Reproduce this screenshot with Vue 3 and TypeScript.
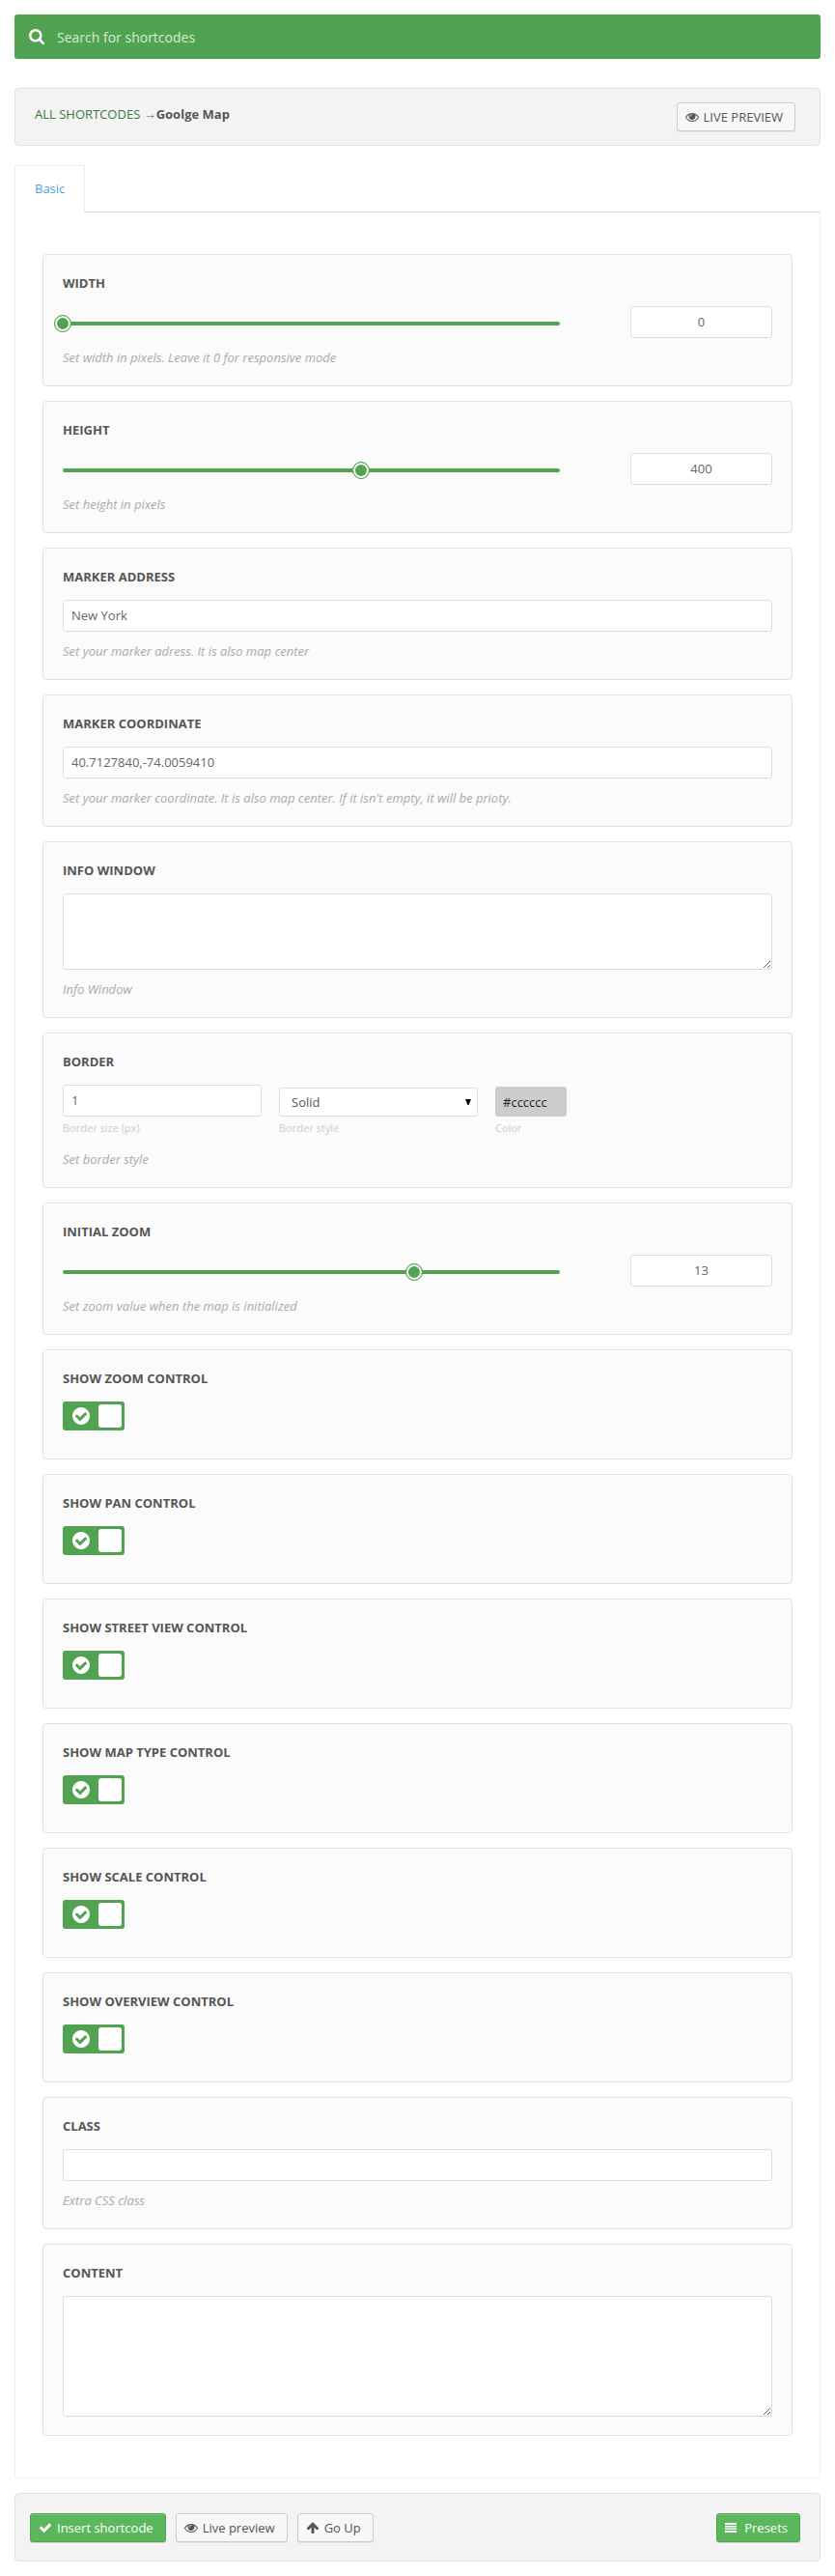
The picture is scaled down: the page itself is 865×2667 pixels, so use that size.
<script setup lang="ts">
import { ref } from 'vue'

type Kind = 'slider' | 'text' | 'area' | 'border' | 'toggle'
interface Field {
  id: string
  title: string
  kind: Kind
  value?: string
  hint?: string
  percent?: number
  tall?: boolean
}

const query = ref('')
const fields = ref<Field[]>([
  { id: 'width', title: 'WIDTH', kind: 'slider', value: '0', percent: 0, hint: 'Set width in pixels. Leave it 0 for responsive mode' },
  { id: 'height', title: 'HEIGHT', kind: 'slider', value: '400', percent: 60, hint: 'Set height in pixels' },
  { id: 'address', title: 'MARKER ADDRESS', kind: 'text', value: 'New York', hint: 'Set your marker adress. It is also map center' },
  { id: 'coordinate', title: 'MARKER COORDINATE', kind: 'text', value: '40.7127840,-74.0059410', hint: "Set your marker coordinate. It is also map center. If it isn't empty, it will be prioty." },
  { id: 'info', title: 'INFO WINDOW', kind: 'area', value: '', hint: 'Info Window' },
  { id: 'border', title: 'BORDER', kind: 'border', hint: 'Set border style' },
  { id: 'zoom', title: 'INITIAL ZOOM', kind: 'slider', value: '13', percent: 70.7, hint: 'Set zoom value when the map is initialized' },
  { id: 'show-zoom', title: 'SHOW ZOOM CONTROL', kind: 'toggle' },
  { id: 'show-pan', title: 'SHOW PAN CONTROL', kind: 'toggle' },
  { id: 'show-street', title: 'SHOW STREET VIEW CONTROL', kind: 'toggle' },
  { id: 'show-type', title: 'SHOW MAP TYPE CONTROL', kind: 'toggle' },
  { id: 'show-scale', title: 'SHOW SCALE CONTROL', kind: 'toggle' },
  { id: 'show-overview', title: 'SHOW OVERVIEW CONTROL', kind: 'toggle' },
  { id: 'class', title: 'CLASS', kind: 'text', value: '', hint: 'Extra CSS class' },
  { id: 'content', title: 'CONTENT', kind: 'area', value: '', tall: true },
])
const borderSize = ref('1')
const borderColor = ref('#cccccc')

const eye =
  'M1664 960q-152-236-381-353 61 104 61 225 0 185-131.5 316.5T896 1280t-316.5-131.5T448 832q0-121 61-225-229 117-381 353 133 205 333.5 326.5T896 1408t434.5-121.5T1664 960zM944 576q0-20-14-34t-34-14q-125 0-214.500 89.500T592 832q0 20 14 34t34 14 34-14 14-34q0-86 61-147t147-61q20 0 34-14t14-34zm848 384q0 34-20 69-140 230-376.500 368.500T896 1536t-499.500-139T20 1029q-20-35-20-69t20-69q140-229 376.500-368T896 384t499.500 139T1772 891q20 35 20 69z'
const check =
  'M1671 566q0 40-28 68l-724 724-136 136q-28 28-68 28t-68-28l-136-136-362-362q-28-28-28-68t28-68l136-136q28-28 68-28t68 28l294 295 656-657q28-28 68-28t68 28l136 136q28 28 28 68z'
const arrowUp =
  'M1675 971q0 51-37 90l-75 75q-38 38-91 38-54 0-90-38L1088 843v704q0 52-37.500 84.500T960 1664H832q-53 0-90.500-32.500T704 1547V843l-294 293q-36 38-90 38t-90-38l-75-75q-38-38-38-90 0-53 38-91l651-651q35-37 90-37 54 0 91 37l651 651q37 39 37 91z'
const checkCircle =
  'M1412 734q0-28-18-46l-91-90q-19-19-45-19t-45 19l-408 407-226-226q-19-19-45-19t-45 19l-91 90q-18 18-18 46 0 27 18 45l362 362q19 19 45 19 27 0 46-19l543-543q18-18 18-45zm252 162q0 209-103 385.500T1281.500 1561 896 1664t-385.500-103T231 1281.500 128 896t103-385.500T510.500 231 896 128t385.500 103T1561 510.500 1664 896z'
const magnifier =
  'M1216 832q0-185-131.500-316.500T768 384 451.500 515.500 320 832t131.500 316.500T768 1280t316.500-131.500T1216 832zm512 832q0 52-38 90t-90 38q-54 0-90-38l-343-342q-179 124-399 124-143 0-273.500-55.500t-225-150-150-225T64 832t55.500-273.500 150-225 225-150T768 128t273.500 55.500 225 150 150 225T1472 832q0 220-124 399l343 343q37 37 37 90z'
</script>

<template>
  <div class="page">
    <label class="search">
      <svg class="search-icon" viewBox="64 128 1664 1664"><path :d="magnifier" /></svg>
      <input v-model="query" type="text" placeholder="Search for shortcodes" />
    </label>

    <header class="crumbs">
      <p class="trail"><a>ALL SHORTCODES</a> <span class="sep">→</span><strong>Goolge Map</strong></p>
      <button class="btn caps" type="button">
        <svg class="ico" viewBox="0 0 1792 1792"><path :d="eye" /></svg>LIVE PREVIEW
      </button>
    </header>

    <nav class="tabs"><a class="tab">Basic</a></nav>

    <main class="panel">
      <section v-for="f in fields" :key="f.id" class="card" :class="[f.kind, { tall: f.tall }]">
        <h5>{{ f.title }}</h5>

        <div v-if="f.kind === 'slider'" class="control slider-row">
          <div class="track"><span class="handle" :style="{ left: f.percent + '%' }"></span></div>
          <input v-model="f.value" class="field number" type="text" />
        </div>
        <input v-else-if="f.kind === 'text'" v-model="f.value" class="control field" type="text" />
        <textarea v-else-if="f.kind === 'area'" v-model="f.value" class="control field"></textarea>
        <div v-else-if="f.kind === 'border'" class="control border-row">
          <div class="col">
            <input v-model="borderSize" class="field" type="text" />
            <small>Border size (px)</small>
          </div>
          <div class="col">
            <div class="select">
              <span>Solid</span>
              <svg class="caret" viewBox="0 0 6 6"><path d="M0 0h6L3.500 6h-1z" /></svg>
            </div>
            <small>Border style</small>
          </div>
          <div class="col narrow">
            <input v-model="borderColor" class="color" type="text" />
            <small>Color</small>
          </div>
        </div>
        <div v-else class="control switch">
          <svg class="tick" viewBox="128 128 1536 1536"><path :d="checkCircle" /></svg>
          <span class="knob"></span>
        </div>

        <p v-if="f.hint" class="hint">{{ f.hint }}</p>
      </section>
    </main>

    <footer class="actions">
      <button class="btn primary" type="button">
        <svg class="ico" viewBox="0 0 1792 1792"><path :d="check" /></svg>Insert shortcode
      </button>
      <button class="btn" type="button">
        <svg class="ico" viewBox="0 0 1792 1792"><path :d="eye" /></svg>Live preview
      </button>
      <button class="btn up" type="button">
        <svg class="ico" viewBox="0 0 1792 1792"><path :d="arrowUp" /></svg>Go Up
      </button>
      <button class="btn primary presets" type="button">
        <svg class="ico bars" viewBox="0 0 12 10">
          <path d="M0 0h12v2H0zM0 3h12v1.500H0zM0 5.500h12V7H0zM0 8h12v2H0z" />
        </svg>Presets
      </button>
    </footer>
  </div>
</template>

<style>
body {
  background: #fff;
}
</style>

<style scoped>
.page,
.page * {
  box-sizing: border-box;
}
.page {
  width: 865px;
  padding: 15px;
  color: #555;
  font: 13px/20px 'Open Sans', 'Noto Sans', sans-serif;
}
input,
textarea,
button {
  font: inherit;
  color: inherit;
  margin: 0;
  outline: 0;
}
svg {
  fill: currentColor;
  display: block;
}
.search {
  display: flex;
  align-items: center;
  height: 46px;
  padding: 0 15px;
  border-radius: 3px;
  background: #51a351;
  color: #fff;
}
.search-icon {
  width: 16px;
  height: 16px;
  margin-right: 13px;
}
.search input {
  flex: 1;
  height: 44px;
  padding: 1px 0 0;
  border: 0;
  background: transparent;
  font-size: 14px;
}
.search input::placeholder {
  color: #d2ecd2;
  opacity: 1;
}
.crumbs {
  display: flex;
  justify-content: space-between;
  align-items: flex-start;
  height: 60px;
  margin-top: 30px;
  padding: 14px 25px 0 20px;
  border: 1px solid #e0e0e0;
  border-radius: 4px;
  background: #f3f3f3;
}
.trail {
  height: 20px;
  margin: 2px 0 0;
}
.trail a {
  color: #3c763d;
}
.sep {
  color: #666;
  font-family: 'Liberation Serif', serif;
  line-height: 1;
}
.btn {
  display: flex;
  align-items: center;
  height: 30px;
  padding: 0 12px 0 8px;
  border: 1px solid #ccc;
  border-radius: 3px;
  background: #f7f7f7;
  box-shadow: inset 0 1px 0 #fff, 0 1px 0 rgba(0, 0, 0, 0.08);
  white-space: nowrap;
}
.ico {
  width: 14px;
  height: 14px;
  margin-right: 5px;
}
.primary {
  border-color: #51a351;
  background: #5bb75b;
  box-shadow: inset 0 1px 0 rgba(255, 255, 255, 0.2), 0 1px 0 rgba(0, 0, 0, 0.15);
  color: #fff;
}
.tabs {
  display: flex;
  height: 49px;
  margin: 20px 0 -1px;
}
.tab {
  position: relative;
  width: 73px;
  padding: 13px 0 0 20px;
  border: 1px solid #eee;
  border-bottom: 0;
  background: #fff;
  color: #4aa3df;
}
.panel {
  display: flex;
  flex-direction: column;
  gap: 15px;
  height: 2347px;
  padding: 43px 28px 0;
  border: 1px solid #eee;
  border-top-color: #ddd;
}
.card {
  flex: none;
  height: 137px;
  padding: 19px 20px 0;
  border: 1px solid #e0e0e0;
  border-radius: 4px;
  background: #fbfbfb;
}
.card.area {
  height: 183px;
}
.card.area.tall {
  height: 199px;
}
.card.border {
  height: 161px;
}
.card.toggle {
  height: 114px;
}
h5 {
  height: 34px;
  margin: 0;
  font-size: 13px;
  line-height: 20px;
  font-weight: 700;
}
.control {
  display: flex;
}
.field {
  display: block;
  width: 100%;
  height: 33px;
  padding: 0 8px 1px;
  border: 1px solid #ddd;
  border-radius: 3px;
  background: #fff;
  color: #666;
}
textarea.field {
  height: 79px;
  resize: vertical;
}
.tall textarea.field {
  height: 125px;
}
.slider-row {
  justify-content: space-between;
}
.track {
  position: relative;
  width: 515px;
  height: 4px;
  margin-top: 16px;
  border-radius: 2px;
  background: #51a351;
}
.handle {
  position: absolute;
  top: -7px;
  width: 18px;
  height: 18px;
  margin-left: -9px;
  border: 1px solid #51a351;
  border-radius: 50%;
  background: #51a351;
  box-shadow: inset 0 0 0 2px #fff;
}
.number {
  width: 147px;
  text-align: center;
}
.border-row {
  align-items: flex-end;
  gap: 18px;
}
.col {
  width: 206px;
}
.narrow {
  width: 74px;
}
.col small {
  display: block;
  height: 24px;
  padding-top: 2px;
  color: #ccc;
  font-size: 11px;
  line-height: 20px;
}
.select {
  display: flex;
  align-items: center;
  justify-content: space-between;
  height: 30px;
  padding: 0 6px 0 12px;
  border: 1px solid #ddd;
  border-radius: 3px;
  background: #fff;
}
.caret {
  width: 6px;
  height: 6px;
  color: #000;
}
.color {
  display: block;
  width: 100%;
  height: 31px;
  padding: 0 8px;
  border: 0;
  border-radius: 3px;
  background: #ccc;
  color: #222;
}
.hint {
  margin: 10px 0 0;
  color: #aaa;
  font-style: italic;
}
.switch {
  align-items: center;
  justify-content: space-between;
  width: 64px;
  height: 30px;
  padding: 0 3px 0 10px;
  border-radius: 3px;
  background: #51a351;
  color: #fff;
}
.tick {
  width: 18px;
  height: 18px;
}
.knob {
  width: 24px;
  height: 24px;
  border-radius: 3px;
  background: #fff;
}
.actions {
  display: flex;
  gap: 10px;
  height: 71px;
  margin-top: 15px;
  padding: 20px 20px 0 15px;
  border: 1px solid #e0e0e0;
  border-radius: 4px;
  background: #f3f3f3;
}
.presets {
  margin-left: auto;
}
.bars {
  width: 12px;
  height: 10px;
  margin-right: 8px;
}
</style>
